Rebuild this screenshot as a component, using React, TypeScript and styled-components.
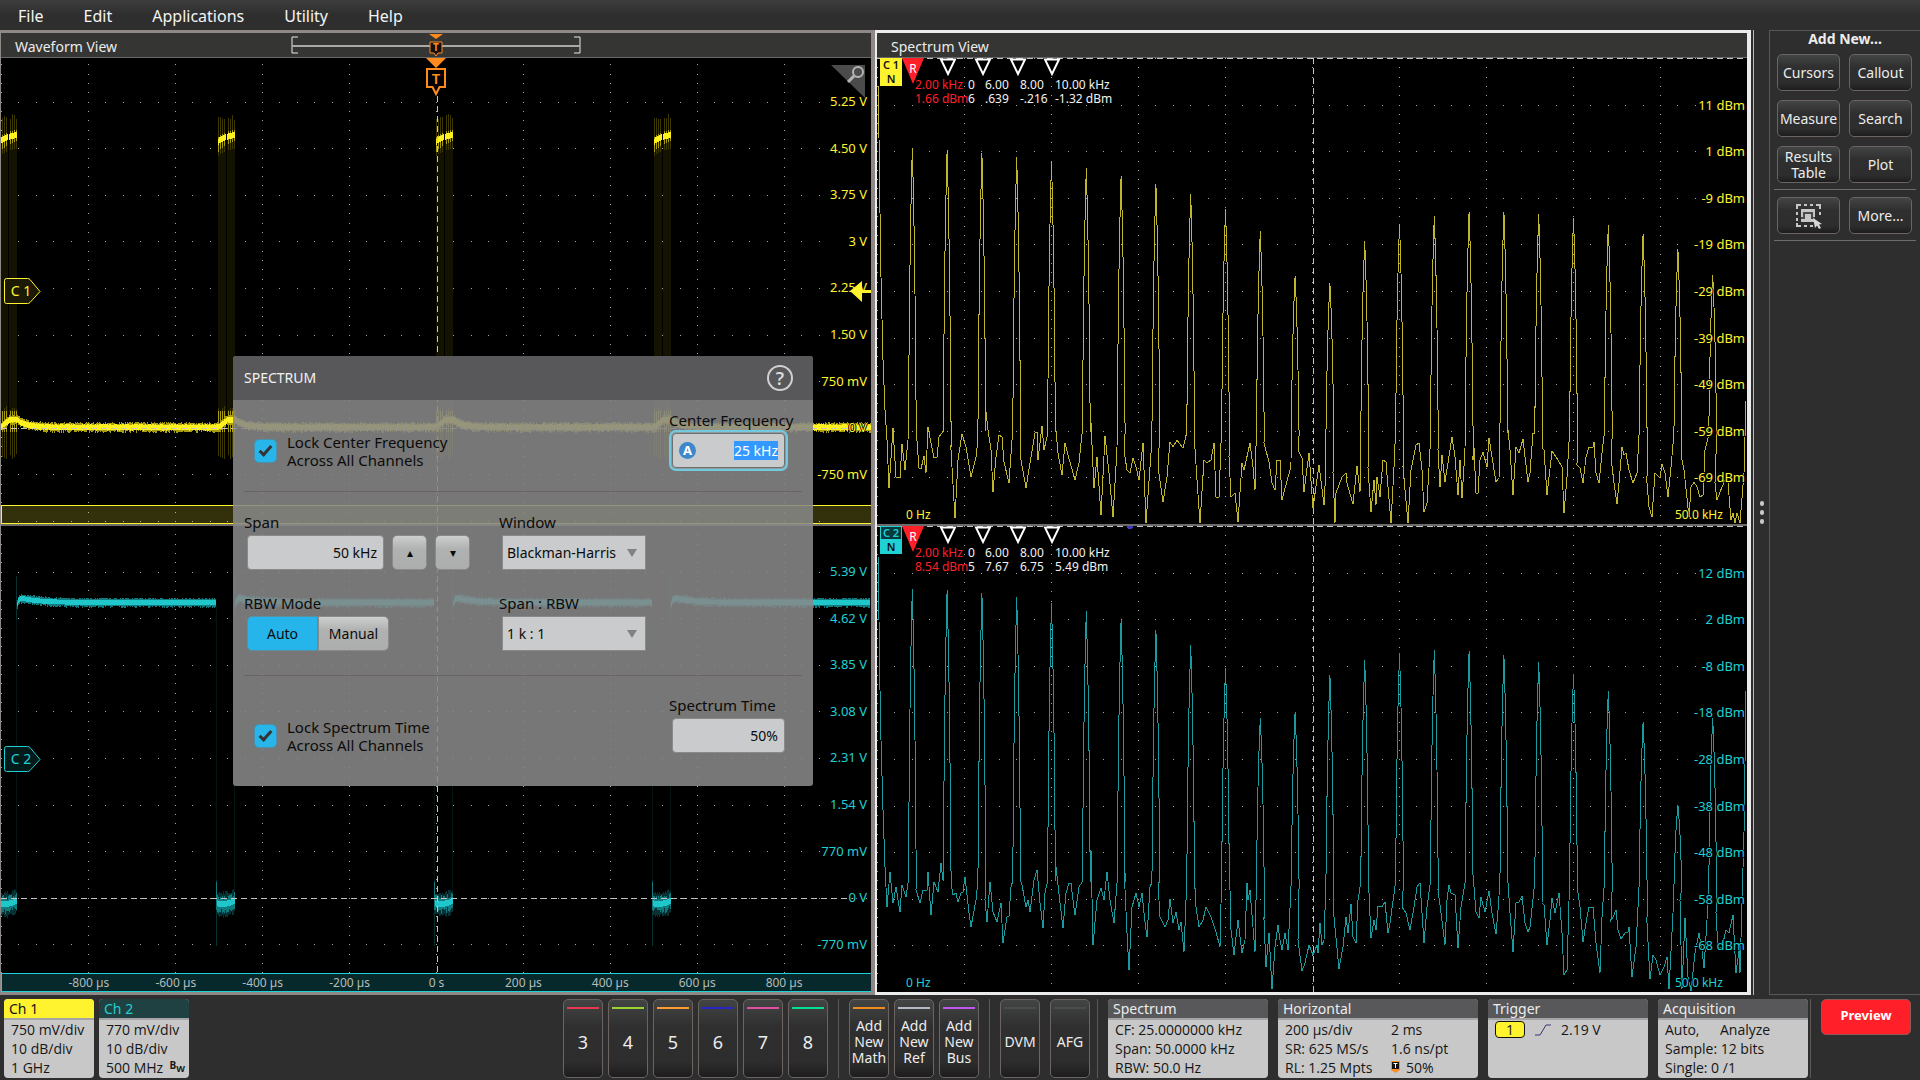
import React, { useEffect, useRef } from "react";
import styled, { createGlobalStyle, css } from "styled-components";

const YELLOW = "#fff330";
const CYAN = "#1fd0d4";
const ORANGE = "#ff8b1f";
const RED = "#ff1f28";

const GlobalStyle = createGlobalStyle`
  *, *::before, *::after { box-sizing: border-box; }
  body { margin: 0; background: #2e2e2e; font-family: "Noto Sans", "Open Sans", sans-serif; }
  button, input, select { font: inherit; margin: 0; }
`;

/* ---------- page frame ---------- */

const Page = styled.div`
  display: flex;
  flex-direction: column;
  min-height: 100vh;
  background: #2e2e2e;
  color: #ececec;
  font-size: 14px;
`;

const MenuBar = styled.nav`
  display: flex;
  gap: 40px;
  height: 30px;
  padding: 1px 18px 0;
  align-items: center;
  background: linear-gradient(#3d3d3d, #2e2e2e 50%);
`;

const MenuItem = styled.button`
  padding: 0;
  border: 0;
  background: none;
  color: #f4f4f4;
  font-size: 16px;
  line-height: 24px;
`;

const Main = styled.main`
  position: relative;
  flex: 1;
  display: grid;
  grid-template-columns: 875fr 876fr 18px 151px;
`;

const Panel = styled.section<{ $active?: boolean }>`
  display: flex;
  flex-direction: column;
  min-width: 0;
  border-style: solid;
  border-color: ${(p) => (p.$active ? "#ececec" : "#8e8886")};
  border-width: ${(p) => (p.$active ? "3px 4px 3px 2px" : "3px 4px 3px 1px")};
  background: #000;
`;

const PanelTitle = styled.header`
  display: grid;
  grid-template-columns: 1fr 290px 1fr;
  align-items: center;
  height: 25px;
  background: #353533;
  border-bottom: 1px solid #6a6866;

  h2 { margin: 0; padding: 3px 0 0 14px; font-size: 14px; font-weight: 400; line-height: 20px; }
  svg { display: block; }
`;

const Plot = styled.div`
  position: relative;
  flex: 1;
  min-height: 200px;
  overflow: hidden;

  & + & { border-top: 2px solid #6d6b69; flex-basis: 2px; }
`;

const Chart = styled.svg`
  position: absolute;
  inset: 0;
  width: 100%;
  height: 100%;
`;

const Pin = styled.div<{ $x: number; $y: number }>`
  position: absolute;
  left: ${(p) => (p.$x / 870) * 100}%;
  top: ${(p) => (p.$y / 466) * 100}%;

  svg { display: block; }
`;

const AxisLabel = styled.span<{ $y: number; $color: string; $right: number }>`
  position: absolute;
  right: ${(p) => p.$right}px;
  top: ${(p) => (p.$y / 466) * 100}%;
  transform: translateY(-50%);
  color: ${(p) => p.$color};
  font-size: 13px;
  line-height: 16px;
  white-space: nowrap;
  text-shadow: 1px 0 #000, -1px 0 #000, 0 1px #000, 0 -1px #000;
`;

const Band = styled.div<{ $color: string; $fill: string }>`
  position: absolute;
  left: 0;
  right: 0;
  bottom: 0;
  height: 19px;
  border: 1px solid ${(p) => p.$color};
  border-right: 0;
  background: ${(p) => p.$fill};
`;

const TimeLabel = styled.span<{ $x: number }>`
  position: absolute;
  left: ${(p) => (p.$x / 870) * 100}%;
  transform: translateX(-50%);
  color: #b4bcbc;
  font-size: 12px;
  line-height: 18px;
  white-space: nowrap;
`;

const FrequencyLabel = styled.span<{ $x: number; $color: string }>`
  position: absolute;
  left: ${(p) => (p.$x / 870) * 100}%;
  bottom: 1px;
  color: ${(p) => p.$color};
  font-size: 12px;
  line-height: 16px;
  text-shadow: 1px 0 #000, -1px 0 #000;
`;

const MarkerText = styled(Pin)<{ $red?: boolean }>`
  color: ${(p) => (p.$red ? RED : "#f2f2f2")};
  font-size: 12px;
  line-height: 14px;
  white-space: nowrap;

  span { display: block; }
`;

const TraceFlag = styled(Pin)<{ $color: string; $outlined?: boolean }>`
  width: 22px;
  background: ${(p) => p.$color};
  color: #111;
  font-size: 11px;
  font-weight: 600;
  line-height: 14px;
  text-align: center;

  span { display: block; height: 14px; white-space: nowrap; }
  ${(p) =>
    p.$outlined &&
    css`
      span:first-child { background: #063a3c; color: ${p.$color}; box-shadow: inset 0 0 0 1px ${p.$color}; }
    `}
`;

const Gutter = styled.div`
  display: flex;
  flex-direction: column;
  align-items: center;
  justify-content: center;
  gap: 4px;
  border-left: 1px solid #b9b9b9;
  margin-left: 2px;
  padding-left: 1px;

  i { width: 4px; height: 5px; border-radius: 2px; background: #c9c9c9; }
`;

/* ---------- right-hand tool column ---------- */

const Sidebar = styled.aside`
  border: 1px solid #5a5856;
  border-right: 0;
  padding: 0 4px;

  h3 { margin: 0; font-size: 14px; line-height: 16px; text-align: center; }
  hr { margin: 0; border: 0; border-top: 1px solid #6e6b69; }
`;

const ToolGrid = styled.div`
  display: grid;
  grid-template-columns: 1fr 1fr;
  gap: 9px;
  padding: 7px 4px 6px 3px;
`;

const raised = css`
  border: 1px solid #6b6460;
  border-radius: 5px;
  background: linear-gradient(#434444, #2f2f2f 35%, #2d2d2d 80%, #1d1d1d);
  color: #ececec;
`;

const ToolButton = styled.button`
  ${raised}
  display: flex;
  align-items: center;
  justify-content: center;
  height: 37px;
  padding: 0;
  font-size: 14px;
  line-height: 16px;
`;

/* ---------- bottom status bar ---------- */

const StatusBar = styled.footer`
  display: flex;
  height: 85px;
  padding: 4px 9px 2px 4px;
`;

const Group = styled.div<{ $gap: number; $push?: boolean }>`
  display: flex;
  gap: ${(p) => p.$gap}px;
  ${(p) => p.$push && "margin-left: auto;"}
`;

const Divider = styled.i<{ $before: number; $after: number }>`
  width: 1px;
  margin: 0 ${(p) => p.$after}px 0 ${(p) => p.$before}px;
  background: #5c5856;
`;

const AddButton = styled.button<{ $bar: string; $big?: boolean }>`
  ${raised}
  display: flex;
  flex-direction: column;
  align-items: center;
  width: 40px;
  padding: 7px 0 2px;
  font-size: ${(p) => (p.$big ? 18 : 14)}px;
  line-height: 16px;
  text-align: center;

  &::before { content: ""; width: 32px; height: 2px; background: ${(p) => p.$bar}; }
  span { flex: 1; display: flex; align-items: center; }
`;

const Readout = styled.section<{ $width: number; $head: string; $ink: string }>`
  display: flex;
  flex-direction: column;
  width: ${(p) => p.$width}px;
  border-radius: 4px;
  overflow: hidden;
  background: #c8c8c8;
  color: #161616;
  font-family: "Open Sans", "Noto Sans", sans-serif;
  line-height: 19px;

  h4 {
    margin: 0;
    height: 21px;
    padding: 0 5px;
    border-bottom: 2px solid #a4a4a6;
    background: ${(p) => p.$head};
    color: ${(p) => p.$ink};
    font-family: "Noto Sans", sans-serif;
    font-size: 14px;
    font-weight: 400;
  }
  p { display: flex; align-items: center; margin: 0; padding: 0 7px; height: 19px; white-space: nowrap; }
`;

const Cell = styled.span<{ $width: number }>`
  width: ${(p) => p.$width}px;
`;

const BwTag = styled.b`
  margin-left: auto;
  margin-right: -3px;
  padding-bottom: 5px;
  font-size: 10px;
  line-height: 12px;
  sub { font-size: 9px; line-height: 0; }
`;

const SourcePill = styled.span`
  width: 30px;
  height: 17px;
  border: 1px solid #111;
  border-radius: 4px;
  background: ${YELLOW};
  line-height: 15px;
  text-align: center;
`;

const SlopeIcon = styled.svg`
  margin: 0 10px;
`;

const PreviewButton = styled.button`
  width: 90px;
  height: 36px;
  padding: 0 0 4px;
  border: 1px solid #8e5a58;
  border-radius: 5px;
  background: ${RED};
  color: #fff;
  font-size: 13px;
  font-weight: 700;
`;

/* ---------- spectrum dialog ---------- */

const Dialog = styled.form`
  position: absolute;
  left: 233px;
  top: 326px;
  width: 580px;
  border-radius: 3px;
  overflow: hidden;
  color: #0b0b0b;
  background: rgba(136, 136, 136, 0.88);
  line-height: 18px;
`;

const DialogHeader = styled.header`
  display: flex;
  align-items: center;
  justify-content: space-between;
  height: 44px;
  padding: 0 20px 0 11px;
  background: #58585a;
  color: #f2f2f2;

  h2 { margin: 0; font-size: 14px; font-weight: 400; }
`;

const HelpButton = styled.button`
  width: 26px;
  height: 26px;
  padding: 0;
  border: 2px solid #d0d0d0;
  border-radius: 50%;
  background: none;
  color: #d8d8d8;
  font-size: 18px;
  font-weight: 600;
  line-height: 20px;
`;

const DialogSection = styled.div<{ $last?: boolean }>`
  display: flex;
  justify-content: space-between;
  margin: 0 11px;
  padding: ${(p) => (p.$last ? "20px 11px 33px 10px" : "11px 11px 23px 10px")};
  ${(p) => !p.$last && "border-bottom: 1px solid #6b6463;"}
`;

const SettingsGrid = styled.div`
  display: grid;
  grid-template-columns: 255px 1fr;
  row-gap: 24px;
  margin: 0 11px;
  padding: 21px 0 24px;
  border-bottom: 1px solid #6b6463;
`;

const CheckLabel = styled.label`
  display: flex;
  align-items: center;
  align-self: flex-end;
  gap: 10px;
  height: 34px;
  font-size: 15px;
`;

const CheckBox = styled.input`
  appearance: none;
  width: 23px;
  height: 24px;
  border: 1px solid #4a90ad;
  border-radius: 5px;
  background: #27b5ea;
  display: grid;
  place-items: center;

  &:checked::before {
    content: "";
    width: 7px;
    height: 13px;
    margin-top: -4px;
    border: solid #333;
    border-width: 0 3px 3px 0;
    transform: rotate(42deg);
  }
`;

const Field = styled.div<{ $width?: number }>`
  display: flex;
  flex-direction: column;
  gap: 4px;
  ${(p) => p.$width && `width: ${p.$width}px;`}
`;

const FieldLabel = styled.label`
  font-size: 15px;
  white-space: nowrap;
`;

const ControlRow = styled.div<{ $gap?: number }>`
  position: relative;
  display: flex;
  gap: ${(p) => p.$gap ?? 0}px;
  padding-left: 3px;
`;

const TextBox = styled.input<{ $width: number }>`
  width: ${(p) => p.$width}px;
  height: 35px;
  padding: 0 6px;
  border: 1px solid #8a8a8a;
  border-radius: 4px;
  background: #cacbcd;
  color: #0b0b0b;
  text-align: right;
  outline: none;

  &:focus { border-color: #707070; box-shadow: 0 0 0 1px #8c9da2, 0 0 0 3px #74c9de; }
  &::selection { background: #3399ff; color: #fff; }
`;

const KnobBadge = styled.span`
  position: absolute;
  left: 10px;
  top: 9px;
  width: 17px;
  height: 17px;
  border-radius: 50%;
  background: #3f87cd;
  color: #fff;
  font-size: 13px;
  font-weight: 700;
  line-height: 17px;
  text-align: center;
`;

const grey = css`
  height: 35px;
  padding: 0;
  border: 1px solid #8a8a8a;
  background: linear-gradient(#cdcfcf, #b0b1b1 40%, #acadad);
  color: #0b0b0b;
`;

const StepButton = styled.button`
  ${grey}
  width: 35px;
  border-radius: 5px;
  font-size: 12px;
`;

const Toggle = styled.button<{ $on?: boolean }>`
  ${grey}
  width: 71px;
  border-radius: ${(p) => (p.$on ? "5px 0 0 5px" : "0 5px 5px 0")};
  ${(p) => p.$on && "background: #25b5ea; border-color: #5d8ea0;"}
`;

const SelectWrap = styled(ControlRow)`
  width: 147px;

  &::after {
    content: "";
    position: absolute;
    right: 9px;
    top: 14px;
    border: 5px solid transparent;
    border-top: 8px solid #818181;
    border-bottom: 0;
  }
`;

const Select = styled.select`
  appearance: none;
  width: 144px;
  height: 35px;
  padding: 0 4px;
  border: 1px solid #8a8a8a;
  border-radius: 0;
  background: #cacbcd;
  color: #0b0b0b;
`;

/* ---------- drawing helpers ---------- */

const noise = (n: number) => {
  const s = Math.sin(n * 12.9898 + 4.137) * 43758.5453;
  return s - Math.floor(s);
};

/** Dotted graticule: columns every 87 units, rows every 46.6, four minor ticks per division. */
function graticule(rowOrigin: number, colOrigin: number, rowEnd: number) {
  let d = "";
  for (let c = 0; c < 10; c++) {
    const x = Math.round(colOrigin + c * 87);
    for (let i = 0; i < 52; i++) {
      const y = Math.round(rowOrigin + i * 9.32);
      if (y > 0 && y < 466) d += `M${x} ${y}.5h1`;
    }
  }
  for (let r = 0; r <= 10; r++) {
    const y = Math.round(rowOrigin + r * 46.6);
    if (y > 464) continue;
    for (let i = 0; i < 50; i++) {
      const x = Math.round(colOrigin + i * 17.4);
      if (x < rowEnd) d += `M${x} ${y}.5h1`;
    }
  }
  return d;
}

/** Joins the harmonic peaks, 2 kHz apart, with the noise floor found between them. */
function spectrumPath(tips: number[], floor: number, start: string, gaps: string[]) {
  const skirt = [[0.97, 4], [0.75, 3.4], [0.5, 2.7], [0.28, 1.8], [0.14, 1]];
  let pts = start;
  gaps.forEach((gap, k) => {
    pts += " " + gap;
    if (k < tips.length) {
      const x = 877.5 + 34.8 * (k + 1);
      const tip = tips[k];
      const at = (f: number) => tip + (floor - tip) * f;
      skirt.forEach(([f, w]) => (pts += ` ${x - w},${at(f)}`));
      pts += ` ${x},${tip}`;
      [...skirt].reverse().forEach(([f, w]) => (pts += ` ${x + w},${at(f)}`));
    }
  });
  return pts;
}

const CH1_TIPS = [148, 150, 153, 157, 161, 168, 176, 184, 194, 209, 231, 276, 283, 241, 224, 216, 212, 212, 214, 218, 225, 234, 249, 275];
const CH1_GAPS = [
  "885,410 887,440 889,488 893,428 896,477 900,478 902,444 905,470 908,440",
  "919,468 921,469 924,456 926,473 928,427 932,448 934,458 937,457 939,437",
  "951,450 955,518 958,460 962,434 966,447 971,477 976,457 978,440",
  "986,412 988,430 991,450 993,492 996,457 999,435 1002,437 1004,462 1009,483 1012,440",
  "1021,460 1026,488 1030,463 1035,433 1037,432 1038,460 1042,426 1044,450 1047,437",
  "1055,420 1058,453 1062,475 1065,443 1068,455 1075,480 1079,463 1081,443",
  "1091,423 1094,488 1097,457 1101,515 1105,436 1109,473 1113,517 1117,450",
  "1124,450 1127,470 1130,473 1133,458 1136,467 1139,480 1143,443 1146,523 1150,467 1152,440",
  "1158,467 1163,502 1167,477 1170,442 1173,447 1177,440 1183,448",
  "1194,433 1197,480 1200,523 1204,460 1207,463 1211,460 1214,443 1216,497 1219,498 1221,443",
  "1229,457 1231,497 1235,493 1238,522 1242,463 1244,470 1250,443 1253,467 1255,490",
  "1264,443 1269,462 1272,483 1275,490 1277,460 1280,460 1282,500 1288,477 1291,467",
  "1298,450 1302,458 1304,492 1309,453 1313,508 1319,465 1324,505 1326,467",
  "1333,473 1335,523 1336,493 1342,477 1346,473 1347,483 1353,504 1357,466 1360,492",
  "1368,468 1371,512 1374,480 1376,505 1377,477 1380,497 1383,460 1386,462 1388,487 1391,523 1394,467",
  "1403,467 1408,523 1411,470 1416,445 1419,443 1422,470 1424,512 1427,503 1430,450",
  "1438,450 1440,487 1442,455 1445,482 1452,437 1455,457 1458,495 1460,460 1462,498 1465,450",
  "1473,460 1474,448 1476,493 1478,493 1480,460 1483,452 1487,467 1489,438 1492,457 1496,482 1499,478",
  "1508,430 1510,450 1513,495 1516,447 1519,453 1523,439 1525,457 1528,482 1530,473 1533,433",
  "1542,448 1544,450 1547,495 1552,451 1558,460 1562,467 1564,513 1567,477",
  "1577,465 1580,468 1583,483 1586,457 1589,447 1593,447 1594,442 1596,473 1599,483 1602,453",
  "1611,457 1614,483 1617,504 1619,483 1622,447 1624,455 1626,453 1629,470 1633,483 1637,473",
  "1647,483 1649,507 1652,517 1655,473 1660,478 1662,464 1665,473 1668,497 1671,467",
  "1682,460 1684,470 1689,517 1691,487 1694,482 1697,487 1700,497 1703,495 1705,450",
  "1715,483 1717,500 1722,487 1725,480 1728,483 1731,520 1733,513 1735,523 1737,513 1740,523 1744,473 1746,401",
];

const CH2_TIPS = [589, 590, 593, 597, 603, 611, 620, 630, 645, 668, 718, 712, 675, 660, 653, 650, 651, 655, 662, 674, 691, 722, 805, 718];
const CH2_GAPS = [
  "885,867 887,907 890,872 893,903 896,887 900,912 902,885 906,897",
  "916,890 920,903 923,890 927,890 928,872 931,915 934,882 938,892 941,863",
  "951,883 953,895 956,893 958,902 961,893 963,892 965,877 969,913 971,927 976,900",
  "985,900 987,922 990,882 993,912 997,922 1001,903 1003,943 1007,917 1009,916 1011,887",
  "1022,885 1026,907 1028,900 1030,912 1034,880 1037,870 1040,903 1043,928 1045,893",
  "1056,867 1060,903 1063,928 1066,893 1069,883 1071,883 1073,900 1075,915 1079,887",
  "1091,850 1093,945 1097,900 1101,888 1104,900 1107,872 1110,900 1114,923",
  "1124,867 1127,933 1129,970 1132,907 1136,893 1139,907 1142,893 1145,922 1147,937 1150,887",
  "1158,883 1160,917 1165,927 1168,920 1170,899 1173,923 1176,912 1179,930 1181,922 1184,952",
  "1196,907 1199,927 1203,920 1206,907 1211,917 1216,932 1220,947",
  "1230,890 1231,930 1234,955 1238,920 1242,953 1245,940 1247,883 1248,900 1250,890 1255,952",
  "1264,920 1266,967 1269,933 1272,989 1275,947 1278,925 1280,940 1282,950 1285,933 1288,950",
  "1298,940 1302,971 1305,963 1309,945 1313,955 1317,945 1318,953 1320,923 1322,945 1324,940",
  "1334,917 1339,969 1343,947 1346,917 1348,933 1351,904 1353,937 1356,943 1358,900",
  "1369,893 1371,938 1374,920 1376,930 1378,906 1382,907 1385,902 1388,933 1390,923",
  "1402,907 1406,913 1410,930 1414,907 1417,887 1420,883 1424,943 1427,907",
  "1438,890 1441,913 1445,945 1447,900 1449,885 1451,893 1455,895 1458,948 1461,907",
  "1474,887 1476,912 1479,918 1481,897 1485,912 1489,891 1492,913 1496,934 1498,910",
  "1507,867 1510,913 1513,952 1516,903 1519,902 1522,896 1525,923 1528,932 1530,927",
  "1542,903 1544,905 1547,945 1550,920 1552,898 1555,913 1559,893 1562,933 1564,975 1567,970",
  "1578,893 1580,907 1583,942 1587,917 1589,907 1593,907 1596,943 1600,973 1602,917",
  "1611,920 1613,917 1616,910 1618,930 1621,939 1625,933 1628,932 1629,927 1632,977 1636,947",
  "1647,923 1650,979 1653,955 1656,960 1660,975 1664,967 1667,957 1669,989 1673,913",
  "1680,900 1682,989 1685,918 1688,977 1691,991 1695,953 1699,933 1702,950 1704,968 1707,920",
  "1716,913 1718,948 1722,947 1726,930 1729,933 1733,915 1736,973 1739,950 1740,973 1744,833 1746,691",
];

const BURSTS = [-1, 217, 435, 653];

/** Level of the channel 1 low state at x: lifted during a burst, decaying after it. */
const ch1Level = (x: number) => {
  for (const b of BURSTS) {
    const dx = x - b;
    if (dx >= 0 && dx <= 17) return 369 - 7.5 * Math.min(1, dx / 9);
    if (dx > 17 && dx < 200) return 369 - 7.5 * Math.exp(-(dx - 17) / 9);
  }
  return 369;
};

const ch2Level = (dx: number) => 76.5 - 5.5 * Math.exp(-dx / 18) + 7 * Math.exp(-dx / 1.5);

function Ch1Wave() {
  let halo = "";
  let core = "";
  let spikes = "";
  for (let x = 0; x < 870; x++) {
    const y = ch1Level(x);
    core += `M${x}.5 ${y - 2 - noise(x)}V${y + 2.6 + noise(x + 9)}`;
    halo += `M${x}.5 ${y - 3 - 2 * noise(x + 300)}V${y + 3 + 3 * noise(x + 700)}`;
  }
  let top = "";
  let faint = "";
  BURSTS.forEach((b) => {
    for (let i = 0; i < 17; i++) {
      if (i === 8) continue;
      const y = 84 - 7 * Math.sqrt(i / 16);
      top += `M${b + i}.5 ${y - 3}V${y + 3}`;
      if (i % 2 === 0) {
        spikes += `M${b + i}.5 ${y - 5}V${y + 10 - i / 4}`;
        faint += `M${b + i}.5 ${56 + 6 * noise(b + i)}V${y + 14}M${b + i}.5 ${348 + 5 * noise(i)}V${396 + 6 * noise(i + 3)}`;
        spikes += `M${b + i}.5 353V374`;
      }
    }
  });
  return (
    <g shapeRendering="crispEdges" fill="none">
      {BURSTS.map((b) => (
        <g key={b} fill="#141200">
          <rect x={b} y="84" width="8" height="284" />
          <rect x={b + 9} y="80" width="8" height="284" />
        </g>
      ))}
      <path d={faint} stroke="#3d3800" />
      <path d={halo} stroke="#a89c10" />
      <path d={spikes} stroke="#a89c10" />
      <path d={core} stroke="#fff020" />
      <path d={top} stroke="#fff020" />
    </g>
  );
}

function Ch2Wave() {
  let core = "";
  let halo = "";
  let rails = "";
  let faint = "";
  BURSTS.map((b) => b - 1).forEach((b) => {
    for (let dx = 0; dx < 199; dx++) {
      const x = b + 18 + dx;
      if (x >= 870) break;
      const y = ch2Level(dx);
      core += `M${x}.5 ${y - 2.4}V${y + 2.4}`;
      halo += `M${x}.5 ${y - 3 - 2 * noise(x)}V${y + 3 + 2.5 * noise(x + 50)}`;
    }
    for (let i = 0; i < 18; i++) {
      const x = b + i;
      const y = 378 - 3 * Math.pow((i - 5) / 12, 2);
      core += `M${x}.5 ${y - 3}V${y + 3}`;
      halo += `M${x}.5 ${y - 4 - 5 * noise(x)}V${y + 4 + 6 * noise(x + 40)}`;
      faint += `M${x}.5 ${y - 13 + 4 * noise(x)}V${y + 14 - 4 * noise(x)}`;
    }
    rails += `M${b - 1}.5 80V354M${b + 17}.5 80V370`;
    faint += `M${b - 1}.5 354V420M${b + 17}.5 50V94`;
    halo += `M${b - 1}.5 356V384`;
  });
  return (
    <g shapeRendering="crispEdges" fill="none">
      <path d={rails} stroke="#041414" />
      <path d={faint} stroke="#073233" />
      <path d={halo} stroke="#107c80" />
      <path d={core} stroke="#1fc6ca" />
    </g>
  );
}

function TriggerPointer() {
  return (
    <svg width="20" height="39" viewBox="0 0 20 39">
      <path d="M0 0H20L10 10Z" fill={ORANGE} />
      <path d="M1 11H19V29H13.500L10 36 6.500 29H1Z" fill="#000" stroke={ORANGE} strokeWidth="2" />
      <text x="10" y="26" textAnchor="middle" fontSize="15" fontWeight="600" fill={ORANGE}>T</text>
    </svg>
  );
}

function Scrubber() {
  return (
    <svg width="290" height="24" fill="none">
      <path d="M7 4H1V20H7M283 4H289V20H283" stroke="#e8e8e8" />
      <path d="M1 13H289" stroke="#a9a9a7" strokeWidth="2" />
      <path d="M138 1H152L145 6Z" fill={ORANGE} />
      <path d="M139 9H151V20H147L145 23 143 20H139Z" fill="#111" stroke={ORANGE} />
      <text x="145" y="18" textAnchor="middle" fontSize="10" fontWeight="700" fill={ORANGE}>T</text>
    </svg>
  );
}

function ChannelTag({ name, color, fill }: { name: string; color: string; fill: string }) {
  return (
    <svg width="37" height="27">
      <path d="M2.500 .5H23.500Q25 .5 26 1.500L36 13.500 26 24.500Q25 25.500 23.500 25.500H2.500Q.5 25.500 .5 23.500V2.500Q.5 .5 2.500 .5Z" fill={fill} stroke={color} />
      <text x="17" y="18" textAnchor="middle" fontSize="14" fill={color}>{name}</text>
    </svg>
  );
}

type AxisProps = { labels: string[]; color: string; from: number; right: number };
const Axis = ({ labels, color, from, right }: AxisProps) => (
  <>
    {labels.map((text, i) => (
      <AxisLabel key={text} $y={from + i * 46.6} $color={color} $right={right}>{text}</AxisLabel>
    ))}
  </>
);

const GRID_INK = "#a6a6a6";

type SpectrumProps = {
  tag: string;
  color: string;
  ink: string;
  labels: string[];
  points: string;
  box: string;
  marks: [number, string, string][];
  outlined?: boolean;
};

function SpectrumPlot({ tag, color, ink, labels, points, box, marks, outlined }: SpectrumProps) {
  return (
    <Plot>
      <Chart viewBox="0 0 870 466" preserveAspectRatio="none" shapeRendering="crispEdges">
        <path d={graticule(0, 0, 822)} stroke={GRID_INK} />
        <path d="M436.500 0V466M0 .5H870" stroke="#c4c4c4" strokeDasharray="6 4" />
        {outlined && <circle cx="253" cy="0" r="3" fill="#3c38c8" />}
      </Chart>
      <Chart viewBox={box} preserveAspectRatio="none" shapeRendering="crispEdges">
        <polyline points={points} fill="none" stroke={ink} />
      </Chart>
      <Axis labels={labels} color={color} from={46.6} right={2} />
      <FrequencyLabel $x={29} $color={color}>0 Hz</FrequencyLabel>
      <FrequencyLabel $x={798} $color={color}>50.0 kHz</FrequencyLabel>
      <TraceFlag $x={3} $y={0} $color={color} $outlined={outlined}>
        <span>{tag}</span>
        <span>N</span>
      </TraceFlag>
      <Pin $x={25} $y={0}>
        <svg width="160" height="27" fill="none">
          <path d="M0 0H22L11 26Z" fill={RED} />
          <text x="11" y="15" textAnchor="middle" fontSize="12" fill="#fff">R</text>
          {[46, 81, 116, 150].map((x) => (
            <path key={x} d={`M${x - 7} 1.500H${x + 7}L${x} 16Z`} stroke="#fff" strokeWidth="2" fill="#000" />
          ))}
        </svg>
      </Pin>
      {marks.map(([x, khz, dbm], i) => (
        <MarkerText key={x} $x={x} $y={20} $red={i === 0}>
          <span>{khz}</span>
          <span>{dbm}</span>
        </MarkerText>
      ))}
    </Plot>
  );
}

/* ---------- dialog ---------- */

function SpectrumDialog() {
  const center = useRef<HTMLInputElement>(null);
  useEffect(() => {
    center.current?.focus({ preventScroll: true });
    center.current?.select();
  }, []);
  return (
    <Dialog aria-label="Spectrum" onSubmit={(e) => e.preventDefault()}>
      <DialogHeader>
        <h2>SPECTRUM</h2>
        <HelpButton type="button">?</HelpButton>
      </DialogHeader>
      <DialogSection>
        <CheckLabel>
          <CheckBox type="checkbox" defaultChecked />
          <span>Lock Center Frequency<br />Across All Channels</span>
        </CheckLabel>
        <Field $width={122}>
          <FieldLabel htmlFor="center">Center Frequency</FieldLabel>
          <ControlRow>
            <TextBox id="center" ref={center} $width={113} defaultValue="25 kHz" />
            <KnobBadge>A</KnobBadge>
          </ControlRow>
        </Field>
      </DialogSection>
      <SettingsGrid>
        <Field>
          <FieldLabel htmlFor="span">Span</FieldLabel>
          <ControlRow $gap={8}>
            <TextBox id="span" $width={137} defaultValue="50 kHz" />
            <StepButton type="button">▴</StepButton>
            <StepButton type="button">▾</StepButton>
          </ControlRow>
        </Field>
        <Field>
          <FieldLabel htmlFor="window">Window</FieldLabel>
          <SelectWrap>
            <Select id="window"><option>Blackman-Harris</option></Select>
          </SelectWrap>
        </Field>
        <Field>
          <FieldLabel as="span">RBW Mode</FieldLabel>
          <ControlRow>
            <Toggle type="button" $on>Auto</Toggle>
            <Toggle type="button">Manual</Toggle>
          </ControlRow>
        </Field>
        <Field>
          <FieldLabel htmlFor="ratio">Span : RBW</FieldLabel>
          <SelectWrap>
            <Select id="ratio"><option>1 k : 1</option></Select>
          </SelectWrap>
        </Field>
      </SettingsGrid>
      <DialogSection $last>
        <CheckLabel>
          <CheckBox type="checkbox" defaultChecked />
          <span>Lock Spectrum Time<br />Across All Channels</span>
        </CheckLabel>
        <Field $width={122}>
          <FieldLabel htmlFor="time">Spectrum Time</FieldLabel>
          <ControlRow>
            <TextBox id="time" $width={113} defaultValue="50%" />
          </ControlRow>
        </Field>
      </DialogSection>
    </Dialog>
  );
}

const TIMES = ["-800 µs", "-600 µs", "-400 µs", "-200 µs", "0 s", "200 µs", "400 µs", "600 µs", "800 µs"];
const CHANNELS: [string, string][] = [["3", "#e8384f"], ["4", "#9bd431"], ["5", "#ff9a2e"], ["6", "#2a26c4"], ["7", "#e04fa0"], ["8", "#00e090"]];
const ADDERS: [string, string][] = [["Add New Math", "#f08c1e"], ["Add New Ref", "#b4b8c4"], ["Add New Bus", "#c058f0"]];

export default function App() {
  return (
    <Page>
      <GlobalStyle />
      <MenuBar>
        {["File", "Edit", "Applications", "Utility", "Help"].map((m) => (
          <MenuItem key={m}>{m}</MenuItem>
        ))}
      </MenuBar>
      <Main>
        <Panel>
          <PanelTitle>
            <h2>Waveform View</h2>
            <Scrubber />
          </PanelTitle>
          <Plot>
            <Chart viewBox="0 0 870 466" preserveAspectRatio="none" shapeRendering="crispEdges">
              <path d={graticule(-3, 0, 822)} stroke={GRID_INK} />
            </Chart>
            <Band $color={YELLOW} $fill="rgba(255, 240, 60, 0.2)" />
            <Chart viewBox="0 0 870 466" preserveAspectRatio="none">
              <Ch1Wave />
              <path d="M0 370.500H870M436.500 38V466" stroke="#c4c4c4" strokeDasharray="6 4" shapeRendering="crispEdges" />
            </Chart>
            <Pin $x={830} $y={7}>
              <svg width="35" height="36">
                <path d="M0 0H34V33Z" fill="#4b4b4b" />
                <circle cx="27" cy="7" r="5" fill="none" stroke="#b4b4b4" strokeWidth="2" />
                <path d="M23 11L17 17" stroke="#b4b4b4" strokeWidth="3" />
              </svg>
            </Pin>
            <Axis labels={["5.25 V", "4.50 V", "3.75 V", "3 V", "2.25 V", "1.50 V", "750 mV", "0 V", "-750 mV"]} color={YELLOW} from={43} right={4} />
            <Pin $x={425} $y={0}><TriggerPointer /></Pin>
            <Pin $x={3} $y={220}><ChannelTag name="C 1" color={YELLOW} fill="#1c1a04" /></Pin>
            <Pin $x={849} $y={223}>
              <svg width="21" height="21"><path d="M0 10L12 0V9H21V12H12V21Z" fill={YELLOW} /></svg>
            </Pin>
          </Plot>
          <Plot>
            <Chart viewBox="0 0 870 466" preserveAspectRatio="none">
              <path d={graticule(-1, 0, 822)} stroke={GRID_INK} shapeRendering="crispEdges" />
              <Ch2Wave />
              <path d="M0 372.500H870M436.500 0V447" stroke="#c4c4c4" strokeDasharray="6 4" shapeRendering="crispEdges" />
            </Chart>
            <Axis labels={["5.39 V", "4.62 V", "3.85 V", "3.08 V", "2.31 V", "1.54 V", "770 mV", "0 V", "-770 mV"]} color={CYAN} from={45} right={4} />
            <Band $color={CYAN} $fill="#07292b">
              {TIMES.map((t, i) => (
                <TimeLabel key={t} $x={87 * (i + 1)}>{t}</TimeLabel>
              ))}
            </Band>
            <Pin $x={3} $y={220}><ChannelTag name="C 2" color={CYAN} fill="#04191a" /></Pin>
          </Plot>
        </Panel>

        <Panel $active>
          <PanelTitle><h2>Spectrum View</h2></PanelTitle>
          <SpectrumPlot
            tag="C 1"
            color={YELLOW}
            ink="#c0b62c"
            box="877 58 870 466"
            labels={["11 dBm", "1 dBm", "-9 dBm", "-19 dBm", "-29 dBm", "-39 dBm", "-49 dBm", "-59 dBm", "-69 dBm"]}
            points={spectrumPath(CH1_TIPS, 440, "878,85 879,138 880,213 881,277 883,360", CH1_GAPS)}
            marks={[[38, "2.00 kHz", "1.66 dBm"], [91, "0", "6"], [108, "6.00", ".639"], [143, "8.00", "-.216"], [178, "10.00 kHz", "-1.32 dBm"]]}
          />
          <SpectrumPlot
            tag="C 2"
            outlined
            color={CYAN}
            ink="#1a9c9f"
            box="877 526 870 466"
            labels={["12 dBm", "2 dBm", "-8 dBm", "-18 dBm", "-28 dBm", "-38 dBm", "-48 dBm", "-58 dBm", "-68 dBm"]}
            points={spectrumPath(CH2_TIPS, 890, "878,555 879,620 880,690 881,740 883,810", CH2_GAPS)}
            marks={[[38, "2.00 kHz", "8.54 dBm"], [91, "0", "5"], [108, "6.00", "7.67"], [143, "8.00", "6.75"], [178, "10.00 kHz", "5.49 dBm"]]}
          />
        </Panel>

        <Gutter><i /><i /><i /></Gutter>

        <Sidebar>
          <h3>Add New...</h3>
          <ToolGrid>
            {["Cursors", "Callout", "Measure", "Search", "Results Table", "Plot"].map((t) => (
              <ToolButton key={t}>{t}</ToolButton>
            ))}
          </ToolGrid>
          <hr />
          <ToolGrid>
            <ToolButton aria-label="Draw a box">
              <svg width="28" height="26" fill="none">
                <path d="M2 6V2H6M9 2H12M15 2H18M21 2H25V6M2 9V12M2 15V18M25 9V12M2 20V23H6M9 23H12M15 23H18" stroke="#c6c6c6" strokeWidth="2" />
                <rect x="6" y="6" width="14" height="13" fill="#c6c6c6" />
                <path d="M6 15H9V10H17V15H20" stroke="#4a4a4a" strokeWidth="2" />
                <path d="M18 15L27 21 24 21.500 26 25 24 26 22 22.500 20 25Z" fill="#d6d6d6" />
              </svg>
            </ToolButton>
            <ToolButton>More...</ToolButton>
          </ToolGrid>
          <hr />
        </Sidebar>

        <SpectrumDialog />
      </Main>

      <StatusBar>
        <Group $gap={5}>
          <Readout $width={90} $head={YELLOW} $ink="#111">
            <h4>Ch 1</h4>
            <p>750 mV/div</p>
            <p>10 dB/div</p>
            <p>1 GHz</p>
          </Readout>
          <Readout $width={90} $head="#1f4142" $ink={CYAN}>
            <h4>Ch 2</h4>
            <p>770 mV/div</p>
            <p>10 dB/div</p>
            <p>500 MHz<BwTag>B<sub>W</sub></BwTag></p>
          </Readout>
        </Group>
        <Group $gap={5} $push>
          {CHANNELS.map(([n, c]) => (
            <AddButton key={n} $bar={c} $big><span>{n}</span></AddButton>
          ))}
        </Group>
        <Divider $before={10} $after={10} />
        <Group $gap={5}>
          {ADDERS.map(([n, c]) => (
            <AddButton key={n} $bar={c}><span>{n}</span></AddButton>
          ))}
        </Group>
        <Divider $before={10} $after={10} />
        <Group $gap={10}>
          <AddButton $bar="#4a4c4c"><span>DVM</span></AddButton>
          <AddButton $bar="#4a4c4c"><span>AFG</span></AddButton>
        </Group>
        <Divider $before={7} $after={10} />
        <Group $gap={10}>
          <Readout $width={160} $head="#58585a" $ink="#ececec">
            <h4>Spectrum</h4>
            <p>CF: 25.0000000 kHz</p>
            <p>Span: 50.0000 kHz</p>
            <p>RBW: 50.0 Hz</p>
          </Readout>
          <Readout $width={200} $head="#58585a" $ink="#ececec">
            <h4>Horizontal</h4>
            <p><Cell $width={106}>200 µs/div</Cell>2 ms</p>
            <p><Cell $width={106}>SR: 625 MS/s</Cell>1.6 ns/pt</p>
            <p>
              <Cell $width={106}>RL: 1.25 Mpts</Cell>
              <Cell $width={15}>
                <svg width="9" height="12">
                  <path d="M0 0H9V9L4.500 12 0 9Z" fill={ORANGE} />
                  <rect x="1" y="1" width="7" height="7" fill="#111" />
                  <path d="M2.500 2.500H6.500M4.500 2.500V7" stroke="#fff" />
                </svg>
              </Cell>
              50%
            </p>
          </Readout>
          <Readout $width={160} $head="#58585a" $ink="#ececec">
            <h4>Trigger</h4>
            <p>
              <SourcePill>1</SourcePill>
              <SlopeIcon width="16" height="12" fill="none">
                <path d="M0 11H5L11 1H16" stroke="#3a3478" />
              </SlopeIcon>
              2.19 V
            </p>
          </Readout>
          <Readout $width={150} $head="#58585a" $ink="#ececec">
            <h4>Acquisition</h4>
            <p><Cell $width={55}>Auto,</Cell>Analyze</p>
            <p>Sample: 12 bits</p>
            <p>Single: 0 /1</p>
          </Readout>
        </Group>
        <Divider $before={2} $after={10} />
        <PreviewButton>Preview</PreviewButton>
      </StatusBar>
    </Page>
  );
}
